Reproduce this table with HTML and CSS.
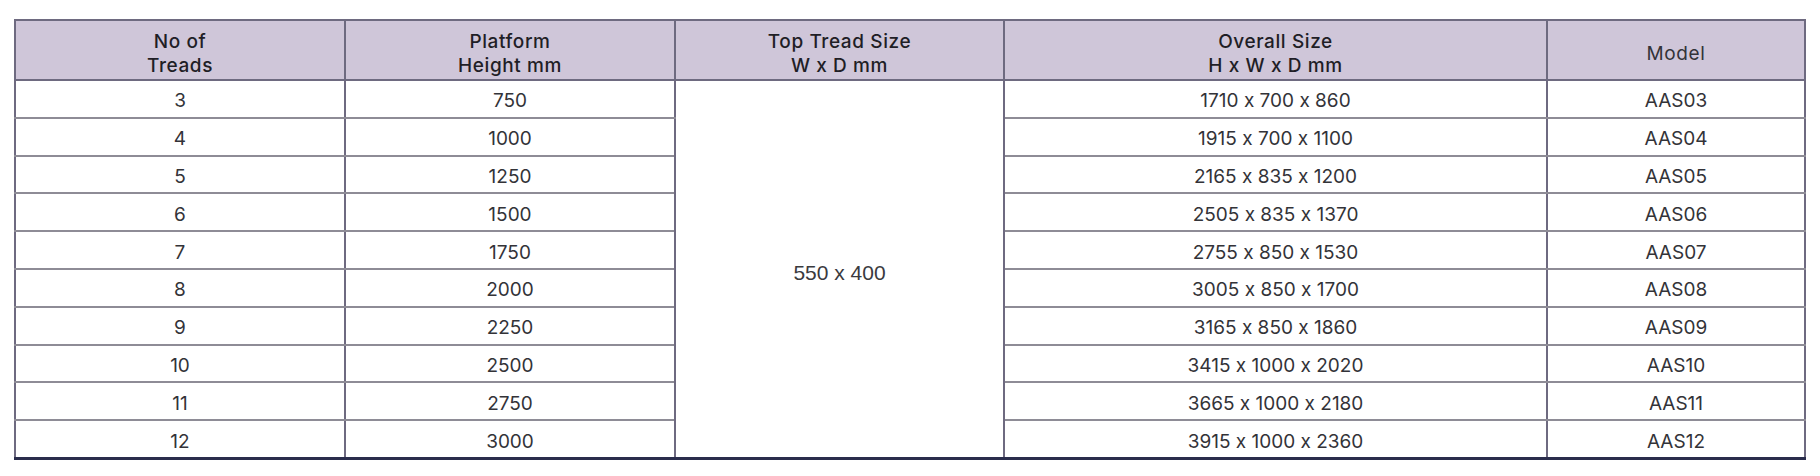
FILE: index.html
```html
<!DOCTYPE html>
<html>
<head>
<meta charset="utf-8">
<link rel="stylesheet" href="styles.css">
</head>
<body>
<div class="wrap">
<table class="spec">
<colgroup>
<col class="c1"><col class="c2"><col class="c3"><col class="c4"><col class="c5">
</colgroup>
<thead>
<tr>
<th>No of<br>Treads</th>
<th>Platform<br>Height mm</th>
<th>Top Tread Size<br>W x D mm</th>
<th>Overall Size<br>H x W x D mm</th>
<th class="light">Model</th>
</tr>
</thead>
<tbody>
<tr><td>3</td><td>750</td><td class="tread" rowspan="10">550 x 400</td><td>1710 x 700 x 860</td><td>AAS03</td></tr>
<tr><td>4</td><td>1000</td><td>1915 x 700 x 1100</td><td>AAS04</td></tr>
<tr><td>5</td><td>1250</td><td>2165 x 835 x 1200</td><td>AAS05</td></tr>
<tr><td>6</td><td>1500</td><td>2505 x 835 x 1370</td><td>AAS06</td></tr>
<tr><td>7</td><td>1750</td><td>2755 x 850 x 1530</td><td>AAS07</td></tr>
<tr><td>8</td><td>2000</td><td>3005 x 850 x 1700</td><td>AAS08</td></tr>
<tr><td>9</td><td>2250</td><td>3165 x 850 x 1860</td><td>AAS09</td></tr>
<tr><td>10</td><td>2500</td><td>3415 x 1000 x 2020</td><td>AAS10</td></tr>
<tr><td>11</td><td>2750</td><td>3665 x 1000 x 2180</td><td>AAS11</td></tr>
<tr class="last"><td>12</td><td>3000</td><td>3915 x 1000 x 2360</td><td>AAS12</td></tr>
</tbody>
</table>
</div>
</body>
</html>
```
FILE: styles.css
```css
html, body {
  margin: 0;
  padding: 0;
  background: #ffffff;
}
.wrap {
  padding: 19px 0 0 14px;
}
.spec {
  border-collapse: collapse;
  table-layout: fixed;
  width: 1790px;
  font-family: "Inter", "Open Sans", sans-serif;
  font-feature-settings: "calt" 0;
  color: #333338;
}
.c1 { width: 330px; }
.c2 { width: 330px; }
.c3 { width: 329px; }
.c4 { width: 543px; }
.c5 { width: 258px; }
.spec th,
.spec td {
  border: 2px solid #7a7684;
  text-align: center;
  vertical-align: middle;
  padding: 0;
}
.spec th {
  background: #cfc6d9;
  height: 50px;
  padding-top: 8px;
  font-size: 19px;
  font-weight: 500;
  letter-spacing: 0.6px;
  line-height: 24px;
  color: #1f1e26;
  border-color: #6e6a80;
}
.spec th.light {
  font-weight: 400;
  color: #333338;
}
.spec td {
  height: 30.8px;
  padding-top: 5px;
  font-size: 19px;
  font-weight: 400;
  line-height: 22px;
  border-top-color: #8e8c96;
  border-bottom-color: #8e8c96;
  border-left-color: #6e6a80;
  border-right-color: #6e6a80;
}
.spec td.tread {
  padding-top: 8px;
  font-family: "Liberation Sans", Arial, sans-serif;
  font-size: 21px;
  letter-spacing: 0;
  color: #3a3a3e;
}
.spec tr.last td,
.spec td.tread {
  border-bottom: 3px solid #2a2d4c;
}
```
